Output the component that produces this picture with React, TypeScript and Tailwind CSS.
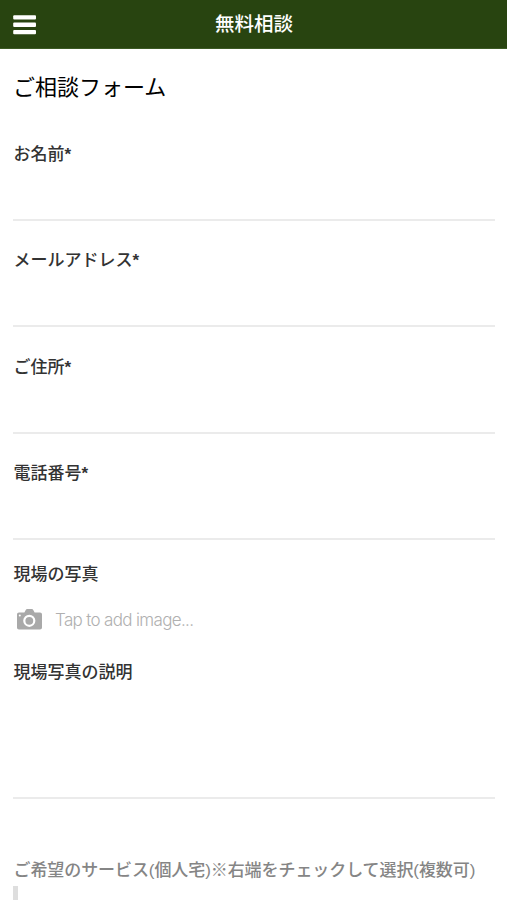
const fields = [
  { id: 'name', label: 'お名前', required: true },
  { id: 'email', label: 'メールアドレス', required: true },
  { id: 'address', label: 'ご住所', required: true },
  { id: 'tel', label: '電話番号', required: true },
]

const labelClass = 'block h-6 pl-[0.5px] text-[17px] leading-6 font-medium text-[#333] whitespace-nowrap'

function MenuIcon() {
  return (
    <svg width="23" height="20" viewBox="0 0 23 20" fill="#fff">
      <rect x="0.2" y="0.2" width="22.8" height="4.3" rx="1" />
      <rect x="0.2" y="7.6" width="22.8" height="4.3" rx="1" />
      <rect x="0.2" y="15" width="22.8" height="4.3" rx="1" />
    </svg>
  )
}

function CameraIcon() {
  return (
    <svg width="25" height="21" viewBox="0 0 25 21" className="shrink-0">
      <path
        d="M2 3.6h5.4l1.2-2.4C9 .4 9.5 0 10.3 0h4.4c.8 0 1.3.4 1.7 1.2l1.2 2.400H23c1.200 0 2 .8 2 2V18.500c0 1.200-.8 2-2 2H2c-1.200 0-2-.8-2-2V5.600c0-1.200.8-2 2-2z"
        fill="#a9a9a9"
      />
      <circle cx="12.3" cy="11.8" r="5" fill="none" stroke="#fff" strokeWidth="2.2" />
      <rect x="1.8" y="5.6" width="2" height="2" rx="1" fill="#fff" />
    </svg>
  )
}

export default function App() {
  return (
    <div className="h-[900px] overflow-hidden bg-white font-['Liberation_Sans','Noto_Sans_CJK_JP',sans-serif]">
      <header className="grid h-[49px] grid-cols-[1fr_auto_1fr] items-center border-b border-[#3c5a24] bg-[#284410] pl-[13px] pr-3">
        <button className="w-fit pt-[2px]" aria-label="menu">
          <MenuIcon />
        </button>
        <h1 className="pb-px text-[19.5px] leading-6 font-medium text-white">無料相談</h1>
      </header>

      <main className="pl-[13px] pr-3">
        <h2 className="pt-[23px] text-[22px] leading-8 text-black">ご相談フォーム</h2>

        <div className="pt-[39px]">
          {fields.map(f => (
            <div key={f.id} className="h-[106.4px]">
              <label htmlFor={f.id} className={labelClass}>
                {f.label}
                {f.required && <span className="font-bold">*</span>}
              </label>
              <input id={f.id} className="block h-[54px] w-full border-b-2 border-[#ebebeb] bg-transparent outline-none" />
            </div>
          ))}
        </div>

        <div className="-mt-[6px]">
          <span className={labelClass}>現場の写真</span>
          <div className="flex h-[74px] items-center gap-[13px] pl-[4px] pb-[9px]">
            <CameraIcon />
            <span className="pt-[4px] font-['Inter',sans-serif] text-[17px] font-light tracking-[-0.66px] text-[#b0b0b0]">Tap to add image...</span>
          </div>
        </div>

        <label htmlFor="note" className={labelClass}>現場写真の説明</label>
        <textarea id="note" className="block h-[114px] w-full resize-none border-b-2 border-[#ebebeb] outline-none" />

        <p className="pt-[60px] pl-[0.5px] text-[17px] leading-6 font-medium tracking-[-0.08px] text-[#858585] whitespace-nowrap">
          ご希望のサービス(個人宅)※右端をチェックして選択(複数可)
        </p>
        <div className="mt-[3px] h-8 border-l-[5px] border-[#dedede]" />
      </main>
    </div>
  )
}
